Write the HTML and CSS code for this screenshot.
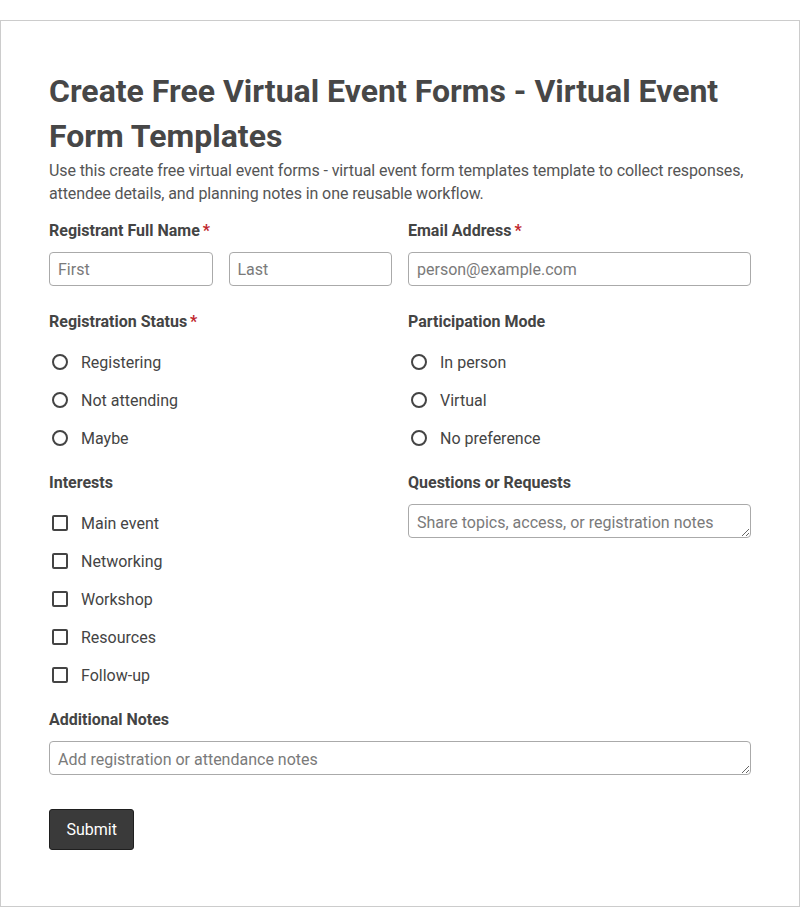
FILE: index.html
```html
<!DOCTYPE html>
<html lang="en">
<head>
<meta charset="utf-8">
<title>Create Free Virtual Event Forms</title>
<link rel="stylesheet" href="styles.css">
</head>
<body>
<form class="card">
  <h1 class="title">Create Free Virtual Event Forms - Virtual Event Form Templates</h1>
  <p class="desc">Use this create free virtual event forms - virtual event form templates template to collect responses, attendee details, and planning notes in one reusable workflow.</p>
  <div class="grid">
    <div class="field">
      <div class="label">Registrant Full Name<span class="req">*</span></div>
      <div class="name-row">
        <input class="input" type="text" placeholder="First">
        <input class="input" type="text" placeholder="Last">
      </div>
    </div>
    <div class="field">
      <div class="label">Email Address<span class="req">*</span></div>
      <input class="input" type="email" placeholder="person@example.com">
    </div>
    <div class="field">
      <div class="label">Registration Status<span class="req">*</span></div>
      <div class="options">
        <label class="option"><input class="radio" type="radio" name="status"><span>Registering</span></label>
        <label class="option"><input class="radio" type="radio" name="status"><span>Not attending</span></label>
        <label class="option"><input class="radio" type="radio" name="status"><span>Maybe</span></label>
      </div>
    </div>
    <div class="field">
      <div class="label">Participation Mode</div>
      <div class="options">
        <label class="option"><input class="radio" type="radio" name="mode"><span>In person</span></label>
        <label class="option"><input class="radio" type="radio" name="mode"><span>Virtual</span></label>
        <label class="option"><input class="radio" type="radio" name="mode"><span>No preference</span></label>
      </div>
    </div>
    <div class="field">
      <div class="label">Interests</div>
      <div class="options">
        <label class="option"><input class="check" type="checkbox"><span>Main event</span></label>
        <label class="option"><input class="check" type="checkbox"><span>Networking</span></label>
        <label class="option"><input class="check" type="checkbox"><span>Workshop</span></label>
        <label class="option"><input class="check" type="checkbox"><span>Resources</span></label>
        <label class="option"><input class="check" type="checkbox"><span>Follow-up</span></label>
      </div>
    </div>
    <div class="field">
      <div class="label">Questions or Requests</div>
      <textarea class="input textarea" rows="1" placeholder="Share topics, access, or registration notes"></textarea>
    </div>
    <div class="field full">
      <div class="label">Additional Notes</div>
      <textarea class="input textarea" rows="1" placeholder="Add registration or attendance notes"></textarea>
    </div>
  </div>
  <button class="submit" type="button">Submit</button>
</form>
</body>
</html>
```

FILE: styles.css
```css
* {
  box-sizing: border-box;
}

html, body {
  margin: 0;
  padding: 0;
  background: #ffffff;
}

body {
  padding-top: 20px;
  font-family: Roboto, "Liberation Sans", Arial, sans-serif;
  color: #444444;
}

.card {
  display: block;
  width: 800px;
  border: 1px solid #cccccc;
  padding: 48px 48px 56px;
}

.title {
  margin: 0;
  font-size: 32px;
  line-height: 45px;
  font-weight: 700;
  color: #474747;
}

.desc {
  margin: 0 0 14px;
  font-size: 16px;
  line-height: 23px;
  letter-spacing: -0.1px;
  color: #555555;
}

.grid {
  display: grid;
  grid-template-columns: 1fr 1fr;
  column-gap: 16px;
  row-gap: 24px;
}

.field {
  display: flex;
  flex-direction: column;
  min-width: 0;
}

.field.full {
  grid-column: 1 / -1;
}

.label {
  font-size: 16px;
  line-height: 22px;
  padding-top: 1px;
  font-weight: 700;
  color: #444444;
  margin-bottom: 10px;
}

.req {
  color: #c0262d;
  margin-left: 3px;
}

.name-row {
  display: flex;
  gap: 16px;
}

.name-row .input {
  flex: 1 1 0;
  min-width: 0;
}

.input {
  display: block;
  width: 100%;
  height: 34px;
  border: 1px solid #aaaaaa;
  border-radius: 4px;
  padding: 0 8px;
  font-family: Roboto, "Liberation Sans", Arial, sans-serif;
  font-size: 16px;
  color: #444444;
  background: #ffffff;
  outline: none;
}

.input::placeholder {
  color: #7a7a7a;
  opacity: 1;
}

.textarea {
  padding: 8px 8px 4px;
  line-height: 20px;
  resize: vertical;
}

.options {
  display: flex;
  flex-direction: column;
  gap: 14px;
  padding-top: 7px;
  margin-bottom: -3px;
}

.option {
  display: flex;
  align-items: center;
  height: 24px;
  gap: 13px;
  font-size: 16px;
  color: #444444;
}

.radio,
.check {
  appearance: none;
  -webkit-appearance: none;
  margin: 0 0 0 3px;
  width: 16px;
  height: 16px;
  border: 2px solid #444444;
  background: #ffffff;
  flex: 0 0 16px;
}

.radio {
  border-radius: 50%;
}

.check {
  border-radius: 2px;
}

.submit {
  display: block;
  margin-top: 34px;
  height: 41px;
  padding: 0 16.5px;
  background: #3a3a3a;
  color: #ffffff;
  border: 1px solid #1f1f1f;
  border-radius: 3px;
  font-family: Roboto, "Liberation Sans", Arial, sans-serif;
  font-size: 16px;
}
```
